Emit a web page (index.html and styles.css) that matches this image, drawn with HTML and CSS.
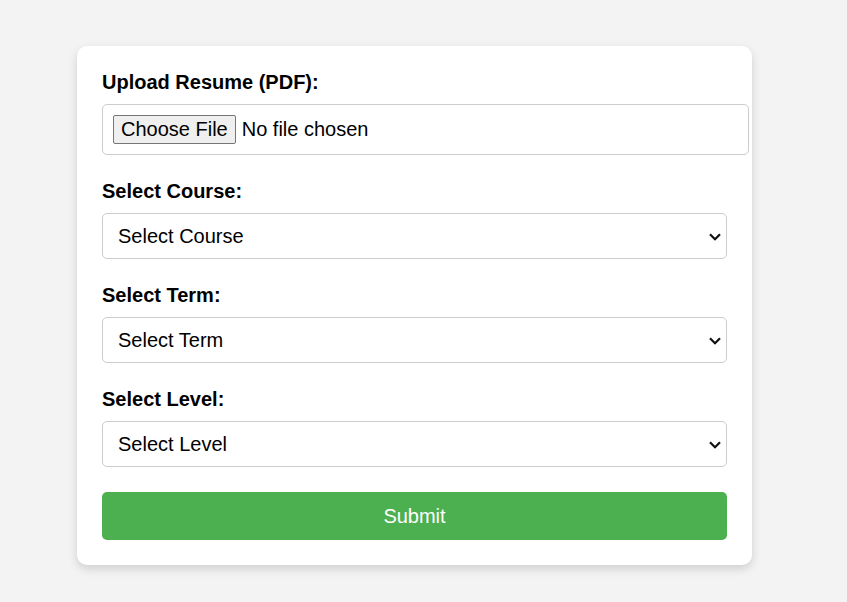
FILE: index.html
```html
<!DOCTYPE html>
<html>
<head>
<meta charset="utf-8">
<link rel="stylesheet" href="styles.css">
</head>
<body>
<form class="card">
  <label class="field-label" for="resume">Upload Resume (PDF):</label>
  <input class="file-input" type="file" id="resume" accept="application/pdf">
  <label class="field-label" for="course">Select Course:</label>
  <div class="select-wrap">
    <select class="select" id="course"><option>Select Course</option></select>
    <svg class="chevron" width="12" height="8" viewBox="0 0 12 8"><polyline points="1,1.2 6,6.2 11,1.2" fill="none" stroke="#111" stroke-width="2.2"/></svg>
  </div>
  <label class="field-label" for="term">Select Term:</label>
  <div class="select-wrap">
    <select class="select" id="term"><option>Select Term</option></select>
    <svg class="chevron" width="12" height="8" viewBox="0 0 12 8"><polyline points="1,1.2 6,6.2 11,1.2" fill="none" stroke="#111" stroke-width="2.2"/></svg>
  </div>
  <label class="field-label" for="level">Select Level:</label>
  <div class="select-wrap">
    <select class="select" id="level"><option>Select Level</option></select>
    <svg class="chevron" width="12" height="8" viewBox="0 0 12 8"><polyline points="1,1.2 6,6.2 11,1.2" fill="none" stroke="#111" stroke-width="2.2"/></svg>
  </div>
  <button class="submit" type="button">Submit</button>
</form>
</body>
</html>
```
FILE: styles.css
```css
html, body {
  margin: 0;
  padding: 0;
}
body {
  background: #f3f3f3;
  font-family: "Liberation Sans", Arial, sans-serif;
  padding: 46px 0 0 77px;
  height: 602px;
  box-sizing: border-box;
}
.card {
  width: 625px;
  background: #fff;
  padding: 25px;
  border-radius: 10px;
  box-shadow: 0 4px 10px rgba(0, 0, 0, 0.15);
  display: flex;
  flex-direction: column;
  align-items: flex-start;
}
.field-label {
  display: block;
  font-size: 20px;
  line-height: 23px;
  font-weight: bold;
  color: #000;
  margin-bottom: 10px;
}
.file-input {
  width: 625px;
  box-sizing: content-box;
  padding: 10px;
  border: 1px solid #ccc;
  border-radius: 5px;
  font-family: "Liberation Sans", Arial, sans-serif;
  font-size: 20px;
  margin: 0 0 25px 0;
  height: 29px;
  background: #fff;
}
.file-input::file-selector-button {
  font-family: "Liberation Sans", Arial, sans-serif;
  font-size: 20px;
  padding: 2px 7px;
  margin-right: 6px;
  border: 1px solid #767676;
  border-radius: 2px;
  background: #efefef;
  color: #000;
}
.select-wrap {
  position: relative;
  width: 625px;
  height: 46px;
  margin: 0 0 25px 0;
}
.select {
  display: block;
  width: 625px;
  height: 46px;
  box-sizing: border-box;
  padding: 10px 30px 10px 15px;
  border: 1px solid #ccc;
  border-radius: 5px;
  font-family: "Liberation Sans", Arial, sans-serif;
  font-size: 20px;
  color: #000;
  background: #fff;
  margin: 0;
  appearance: none;
  -webkit-appearance: none;
}
.chevron {
  position: absolute;
  right: 6px;
  top: 20px;
  pointer-events: none;
}
.submit {
  width: 625px;
  height: 48px;
  border: none;
  border-radius: 5px;
  background: #4caf50;
  color: #fff;
  font-family: "Liberation Sans", Arial, sans-serif;
  font-size: 20px;
  padding: 0;
  margin: 0;
}
```
